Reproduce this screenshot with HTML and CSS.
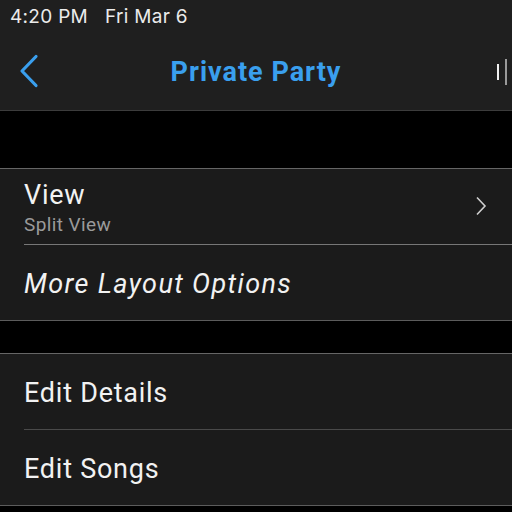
FILE: index.html
```html
<!DOCTYPE html>
<html lang="en">
<head>
    <meta charset="UTF-8">
    <meta name="viewport" content="width=device-width, initial-scale=1.0">
    <title>Private Party</title>
    <link rel="stylesheet" href="styles.css">
</head>
<body>
    <div class="top">
        <div class="status">4:20 PM<span class="date">Fri Mar 6</span></div>
        <div class="nav">
            <button class="back-button">
                <svg width="24" height="34" viewBox="0 0 24 34"><path d="M20 2.5 L6 17 L20 31.5" fill="none" stroke="#3a9fee" stroke-width="3.2" stroke-linecap="round" stroke-linejoin="round"/></svg>
            </button>
            <h1 class="title">Private Party</h1>
            <div class="edge-icon">
                <span class="bar-short"></span>
                <span class="bar-long"></span>
            </div>
        </div>
    </div>

    <div class="gap gap-big"></div>

    <div class="group">
        <div class="row row-split">
            <div class="row-text">
                <div class="row-title">View</div>
                <div class="row-sub">Split View</div>
            </div>
            <svg class="chevron" width="12" height="20" viewBox="0 0 12 20"><path d="M2 1.5 L10 10 L2 18.5" fill="none" stroke="#cfcfcf" stroke-width="1.6"/></svg>
        </div>
        <div class="row">
            <div class="row-title italic">More Layout Options</div>
        </div>
    </div>

    <div class="gap gap-small"></div>

    <div class="group">
        <div class="row row-split dim">
            <div class="row-title">Edit Details</div>
        </div>
        <div class="row">
            <div class="row-title">Edit Songs</div>
        </div>
    </div>
</body>
</html>
```

FILE: styles.css
```css
body {
    margin: 0;
    width: 512px;
    height: 512px;
    overflow: hidden;
    background: #000;
    color: #f2f2f2;
    font-family: Roboto, "Liberation Sans", sans-serif;
}

.top {
    height: 110px;
    background: #1f1f1f;
    border-bottom: 1px solid #3c3c3c;
}

.status {
    height: 35px;
    padding-left: 10px;
    font-family: Inter, "Liberation Sans", sans-serif;
    font-size: 19px;
    letter-spacing: 0.3px;
    line-height: 34px;
    color: #ebebeb;
}

.status .date {
    margin-left: 17px;
}

.nav {
    height: 75px;
    display: flex;
    align-items: center;
    position: relative;
}

.back-button {
    background: none;
    border: none;
    padding: 0;
    margin-left: 16px;
    margin-top: -4px;
    display: flex;
    cursor: pointer;
}

.title {
    position: absolute;
    left: 0;
    right: 0;
    top: 21px;
    margin: 0;
    text-align: center;
    font-size: 27px;
    letter-spacing: 1px;
    font-weight: 700;
    color: #3a9fee;
    pointer-events: none;
}

.edge-icon {
    margin-left: auto;
    margin-right: 5px;
    margin-top: -2px;
    display: flex;
    align-items: center;
    gap: 6px;
}

.bar-short {
    width: 2px;
    height: 16px;
    background: #f0f0f0;
}

.bar-long {
    width: 2px;
    height: 26px;
    background: #9a9a9a;
}

.gap-big {
    height: 57px;
}

.gap-small {
    height: 32px;
}

.group {
    background: #1b1b1b;
    border-top: 1px solid #666;
    border-bottom: 1px solid #5c5c5c;
}

.row {
    height: 75px;
    box-sizing: border-box;
    padding-top: 3px;
    margin-left: 24px;
    display: flex;
    align-items: center;
}

.row-split {
    border-bottom: 1px solid #777;
    height: 76px;
}

.row-split.dim {
    border-bottom-color: #4a4a4a;
}

.row-text {
    flex: 1;
}

.row-title {
    font-size: 27px;
    letter-spacing: 0.75px;
    line-height: 30px;
}

.row-title.italic {
    font-style: italic;
    letter-spacing: 1.35px;
}

.row-sub {
    margin-top: 4px;
    font-size: 19px;
    letter-spacing: 0.4px;
    line-height: 22px;
    color: #9a9a9a;
}

.chevron {
    margin-right: 25px;
    margin-top: -4px;
}
```
